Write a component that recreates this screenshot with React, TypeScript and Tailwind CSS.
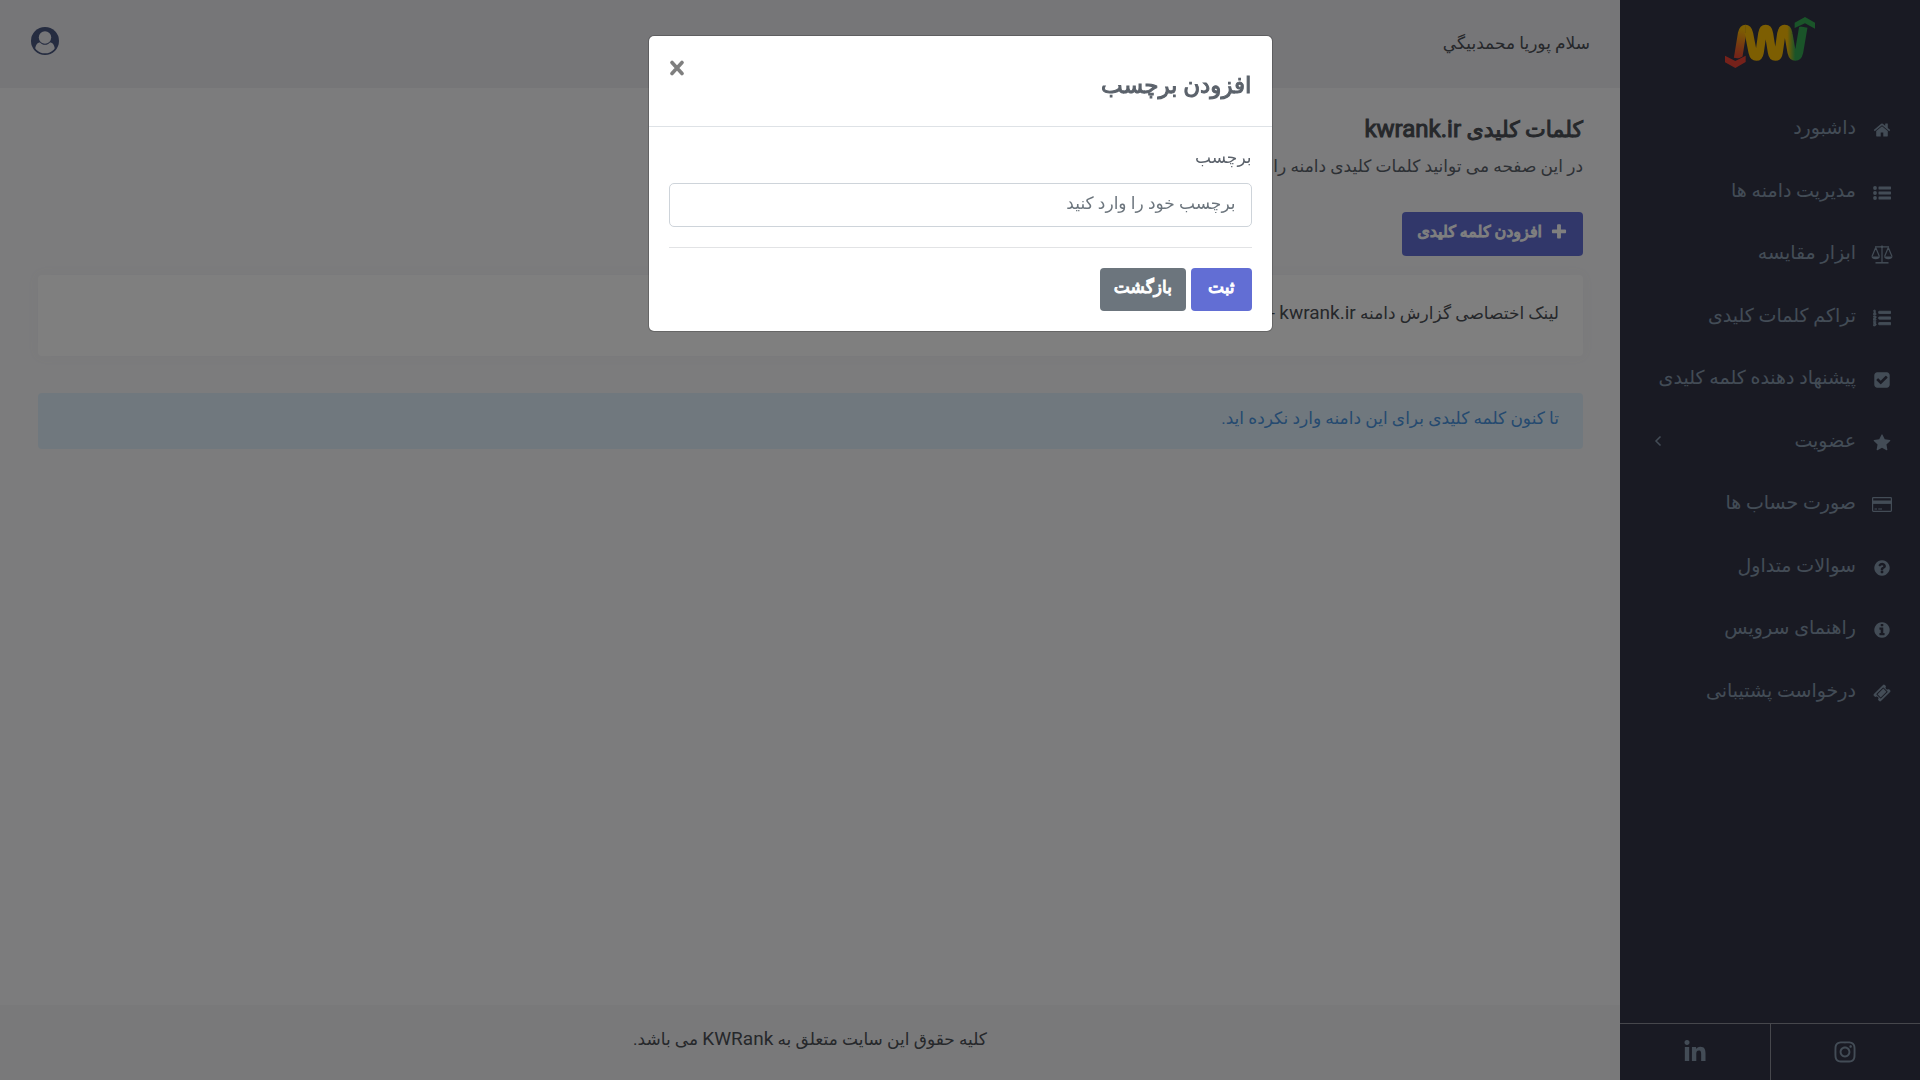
import { FC, ReactNode } from 'react'
import { FaInstagram, FaLinkedinIn, FaListOl } from 'react-icons/fa'

interface GlyphProps {
  d: string
  className?: string
}

const Glyph: FC<GlyphProps> = ({ d, className = 'w-[18px] h-[18px]' }) => (
  <svg viewBox="0 0 1792 1792" className={className} fill="currentColor" aria-hidden="true">
    <path d={d} />
  </svg>
)

const paths = {
  home: 'M1472 992v480q0 26-19 45t-45 19h-384v-384h-256v384h-384q-26 0-45-19t-19-45v-480q0-1 .5-3t.5-3l575-474 575 474q1 2 1 6zm223-69l-62 74q-8 9-21 11h-3q-13 0-21-7l-692-577-692 577q-12 8-24 7-13-2-21-11l-62-74q-8-10-7-23.5t11-21.5l719-599q32-26 76-26t76 26l244 204v-195q0-14 9-23t23-9h192q14 0 23 9t9 23v408l219 182q10 8 11 21.5t-7 23.5z',
  check:
    'M813 1299l614-614q19-19 19-45t-19-45l-102-102q-19-19-45-19t-45 19l-467 467-211-211q-19-19-45-19t-45 19l-102 102q-19 19-19 45t19 45l358 358q19 19 45 19t45-19zm851-883v960q0 119-84.5 203.5t-203.5 84.5h-960q-119 0-203.5-84.5t-84.5-203.5v-960q0-119 84.5-203.5t203.5-84.5h960q119 0 203.5 84.5t84.5 203.5z',
  star: 'M1728 647q0 22-26 48l-363 354 86 500q1 7 1 20 0 21-10.5 35.5t-30.5 14.5q-19 0-40-12l-449-236-449 236q-22 12-40 12-21 0-31.5-14.5t-10.5-35.5q0-6 2-20l86-500-364-354q-25-27-25-48 0-37 56-46l502-73 225-455q19-41 49-41t49 41l225 455 502 73q56 9 56 46z',
  plus: 'M1600 736v192q0 40-28 68t-68 28h-416v416q0 40-28 68t-68 28h-192q-40 0-68-28t-28-68v-416h-416q-40 0-68-28t-28-68v-192q0-40 28-68t68-28h416v-416q0-40 28-68t68-28h192q40 0 68 28t28 68v416h416q40 0 68 28t28 68z',
  info: 'M1152 1376v-160q0-14-9-23t-23-9h-96v-512q0-14-9-23t-23-9h-320q-14 0-23 9t-9 23v160q0 14 9 23t23 9h96v320h-96q-14 0-23 9t-9 23v160q0 14 9 23t23 9h448q14 0 23-9t9-23zm-128-896v-160q0-14-9-23t-23-9h-192q-14 0-23 9t-9 23v160q0 14 9 23t23 9h192q14 0 23-9t9-23zm640 416q0 209-103 385.5t-279.5 279.5-385.5 103-385.5-103-279.5-279.5-103-385.5 103-385.5 279.5-279.5 385.5-103 385.5 103 279.5 279.5 103 385.5z',
  question:
    'M1024 1376v-192q0-14-9-23t-23-9h-192q-14 0-23 9t-9 23v192q0 14 9 23t23 9h192q14 0 23-9t9-23zm256-672q0-88-55.5-163t-138.5-116-170-41q-243 0-371 213-15 24 8 42l132 100q7 6 19 6 16 0 25-12 53-68 86-92 34-24 86-24 48 0 85.5 26t37.5 59q0 38-20 61t-68 45q-63 28-115.5 86.5t-52.5 125.5v36q0 14 9 23t23 9h192q14 0 23-9t9-23q0-19 21.5-49.5t54.5-49.5q32-18 49-28.5t46-35 44.5-48 28-60.5 12.5-81zm384 192q0 209-103 385.5t-279.5 279.5-385.5 103-385.5-103-279.5-279.5-103-385.5 103-385.5 279.5-279.5 385.5-103 385.5 103 279.5 279.5 103 385.5z',
  ticket:
    'M1024 452l316 316-572 572-316-316zm-211 979l618-618q19-19 19-45t-19-45l-362-362q-18-18-45-18t-45 18l-618 618q-19 19-19 45t19 45l362 362q18 18 45 18t45-18zm889-637l-907 908q-37 37-90.5 37t-90.5-37l-126-125q56-56 56-136t-56-136-136-56-136 56l-125-126q-37-37-37-90.5t37-90.5l907-906q37-37 90.5-37t90.5 37l125 125q-56 56-56 136t56 136 136 56 136-56l126 125q37 37 37 90.5t-37 90.5z',
}

const ListIcon = () => (
  <svg viewBox="0 0 18 14" className="w-[18px] h-[14px]" fill="currentColor" aria-hidden="true">
    <circle cx="2" cy="2" r="1.9" />
    <circle cx="2" cy="7" r="1.9" />
    <circle cx="2" cy="12" r="1.9" />
    <rect x="5.5" y="0.5" width="12.5" height="3" rx="0.4" />
    <rect x="5.5" y="5.5" width="12.5" height="3" rx="0.4" />
    <rect x="5.5" y="10.5" width="12.5" height="3" rx="0.4" />
  </svg>
)

const ScaleIcon = () => (
  <svg viewBox="0 0 22 19" className="w-[22px] h-[19px]" fill="none" stroke="currentColor" strokeWidth="1.2" strokeLinejoin="round" aria-hidden="true">
    <path d="M4 1.8H18M11 1V17.5" />
    <circle cx="11" cy="1.8" r="1.2" fill="currentColor" stroke="none" />
    <path d="M4.7 2.5L1 11.5M4.7 2.5L8.4 11.5M17.3 2.5L13.6 11.5M17.3 2.5L21 11.5" />
    <path d="M0.5 11.5H8.9Q8.5 14.3 4.7 14.3T0.5 11.5zM13.1 11.5H21.5Q21.1 14.3 17.3 14.3T13.1 11.5z" fill="currentColor" stroke="none" />
    <path d="M4.5 17.8H17.5" strokeWidth="1.5" />
  </svg>
)

const CardIcon = () => (
  <svg viewBox="0 0 20 15" className="w-5 h-[15px]" fill="none" stroke="currentColor" strokeWidth="1.2" aria-hidden="true">
    <rect x="0.6" y="0.6" width="18.8" height="13.8" rx="0.8" />
    <path d="M0.6 5.2H19.4" strokeWidth="3.4" />
    <path d="M2.5 12H5M6.2 12H10" />
  </svg>
)

const Logo = () => (
  <svg viewBox="0 0 270 153" className="w-[90px] h-[51px]" fill="none" role="img" aria-label="KWRank">
    <defs>
      <linearGradient id="wave" gradientUnits="userSpaceOnUse" x1="34" y1="124" x2="56" y2="28">
        <stop offset="0" stopColor="#ea4335" />
        <stop offset="0.35" stopColor="#ec6a28" />
        <stop offset="0.9" stopColor="#fbbc05" />
      </linearGradient>
      <linearGradient id="rise" gradientUnits="userSpaceOnUse" x1="180" y1="0" x2="214" y2="0">
        <stop offset="0.2" stopColor="#fbbc05" />
        <stop offset="0.9" stopColor="#34a853" />
      </linearGradient>
    </defs>
    <path d="M39 124L51 50Q54 36 62 36" stroke="url(#wave)" strokeWidth="25" />
    <path
      d="M61 36Q69 36 72 50L83 106Q86 119 94 119T104 106L112 50Q114 36 122 36T132 50L141 106Q143 119 151 119T161 106L169 50Q171 36 180 36"
      stroke="#fbbc05"
      strokeWidth="25"
    />
    <path d="M179 36Q188 36 190 50L200 106Q203 119 211 119T222 106L235 30" stroke="url(#rise)" strokeWidth="25" />
    <path d="M207 35V16L240 -3L272 16V38L240 22L209 37z" fill="#333547" />
    <path d="M209 33V17L240 0L270 17V35L240 19z" fill="#34a853" />
    <path d="M-2 113L31 129L64 113V136L31 154L-2 137z" fill="#333547" />
    <path d="M0 116L31 132L62 116V135L31 153L0 136z" fill="#ea4335" />
  </svg>
)

interface MenuEntry {
  label: string
  icon: ReactNode
  expandable?: boolean
}

const menu: MenuEntry[] = [
  { label: 'داشبورد', icon: <Glyph d={paths.home} /> },
  { label: 'مدیریت دامنه ها', icon: <ListIcon /> },
  { label: 'ابزار مقایسه', icon: <ScaleIcon /> },
  { label: 'تراکم کلمات کلیدی', icon: <FaListOl className="w-[18px] h-[18px]" stroke="currentColor" strokeWidth={24} /> },
  { label: 'پیشنهاد دهنده کلمه کلیدی', icon: <Glyph d={paths.check} /> },
  { label: 'عضویت', icon: <Glyph d={paths.star} />, expandable: true },
  { label: 'صورت حساب ها', icon: <CardIcon /> },
  { label: 'سوالات متداول', icon: <Glyph d={paths.question} /> },
  { label: 'راهنمای سرویس', icon: <Glyph d={paths.info} /> },
  { label: 'درخواست پشتیبانی', icon: <Glyph d={paths.ticket} /> },
]

const Sidebar = () => (
  <aside className="w-[300px] shrink-0 flex flex-col bg-[#333547] text-[#8699ad]">
    <a href="#" className="h-[88px] pt-[17px] flex items-start justify-center">
      <Logo />
    </a>
    <nav className="grow pt-[9px]">
      <ul>
        {menu.map((item) => (
          <li key={item.label} className="h-[62px] odd:mb-px">
            <a href="#" className="h-full pr-[27px] pl-[34px] flex items-center">
              <span className="w-[22px] ml-[15px] pt-[3px] flex justify-center">{item.icon}</span>
              <span className="text-[19px] leading-8 whitespace-nowrap">{item.label}</span>
              {item.expandable && (
                <svg viewBox="0 0 8 12" className="w-2 h-3 mr-auto" fill="none" stroke="currentColor" strokeWidth="1.5" aria-hidden="true">
                  <path d="M6.5 1.5L2 6L6.5 10.5" />
                </svg>
              )}
            </a>
          </li>
        ))}
      </ul>
    </nav>
    <div className="h-[57px] flex border-t border-[#8d8e99]">
      <a href="#" aria-label="Instagram" className="flex-1 flex items-center justify-center border-l border-[#8d8e99]">
        <FaInstagram className="w-6 h-6" />
      </a>
      <a href="#" aria-label="LinkedIn" className="flex-1 flex items-center justify-center">
        <FaLinkedinIn className="w-6 h-6" />
      </a>
    </div>
  </aside>
)

const UserIcon = () => (
  <svg viewBox="0 0 28 28" className="w-7 h-7" aria-hidden="true">
    <defs>
      <clipPath id="face">
        <circle cx="14" cy="14" r="12.3" />
      </clipPath>
    </defs>
    <circle cx="14" cy="14" r="14" fill="#4a5880" />
    <g fill="#ececf1" clipPath="url(#face)">
      <path d="M4 24C4 18 6.5 15.5 9 15.5C10.5 17 12 17.8 14 17.8S17.5 17 19 15.5C21.5 15.5 24 18 24 24L14 28z" />
      <circle cx="14" cy="10.5" r="6.2" />
    </g>
  </svg>
)

const Modal = () => (
  <div className="fixed inset-0 z-10 bg-black/50 flex items-start justify-center pt-[35px]">
    <div role="dialog" aria-modal="true" aria-labelledby="modal-title" className="w-full max-w-[625px] bg-white rounded-md border border-black/20 bg-clip-padding text-[#5b626b]">
      <div className="flex justify-between items-start h-[91px] px-5 border-b border-[#dee2e6]">
        <h5 id="modal-title" className="pt-8 text-[23px] leading-9 font-normal [-webkit-text-stroke:1px]">
          افزودن برچسب
        </h5>
        <button type="button" aria-label="Close" className="mt-6 text-[#7f7f7f]">
          <svg viewBox="0 0 16 16" className="w-4 h-4" stroke="currentColor" strokeWidth="3.6" strokeLinecap="round" aria-hidden="true">
            <path d="M3 2.5L13 13.5M13 2.5L3 13.5" />
          </svg>
        </button>
      </div>
      <form className="px-5 pt-[18px] pb-5">
        <label htmlFor="tag" className="block text-[17px] leading-6 mb-[14px]">
          برچسب
        </label>
        <input
          id="tag"
          type="text"
          placeholder="برچسب خود را وارد کنید"
          className="w-full h-11 px-[15px] pb-1 rounded-[5px] border border-[#ced4da] text-[17px] placeholder:text-[#6c757d]"
        />
        <hr className="my-5 border-[#e2e3e5]" />
        <div className="flex gap-[5px] text-white text-[17px] [-webkit-text-stroke:1px]">
          <button type="submit" className="h-[43px] px-[17px] pb-1 rounded-[4px] bg-[#626ed4]">
            ثبت
          </button>
          <button type="button" className="h-[43px] px-[14px] pb-1 rounded-[4px] bg-[#6c757d]">
            بازگشت
          </button>
        </div>
      </form>
    </div>
  </div>
)

const App = () => {
  return (
    <div dir="rtl" className="min-h-screen flex font-[Roboto,'DejaVu_Sans',sans-serif] text-[17px] text-[#5b626b] bg-[#f8f8fa]">
      <Sidebar />
      <div className="grow min-w-0 flex flex-col">
        <header className="h-[88px] pr-[30px] pl-[31px] flex items-center justify-between bg-[#ececf1]">
          <span className="text-[#4c5056]">سلام پوريا محمدبيگي</span>
          <button type="button" aria-label="Account" className="pb-[6px]">
            <UserIcon />
          </button>
        </header>
        <main className="grow pr-[37px] pl-[38px] pt-[25px]">
          <h1 className="text-[22px] leading-8 font-normal text-[#4c5056] [-webkit-text-stroke:1px]">
            کلمات کلیدی <span className="text-[24px]">kwrank.ir</span>
          </h1>
          <p className="leading-8 mt-1 mb-[30px]">در این صفحه می توانید کلمات کلیدی دامنه را</p>
          <button type="button" className="h-11 px-[15px] pb-1 flex items-center gap-2 rounded-[4px] bg-[#626ed4] text-white">
            <Glyph d={paths.plus} className="w-[18px] h-[18px]" />
            <span className="text-[16px] [-webkit-text-stroke:1px]">افزودن کلمه کلیدی</span>
          </button>
          <section className="mt-[19px] h-[81px] px-6 pb-1 flex items-center rounded-[4px] bg-white text-[#4c5056] shadow-[0_0_13px_#f3f3f6]">
            <p>
              لینک اختصاصی گزارش دامنه <span className="text-[19px]">kwrank.ir</span> -
            </p>
          </section>
          <div role="alert" className="mt-[37px] h-14 px-6 pb-1 flex items-center rounded-[4px] bg-[#e1f1fc] text-[#4a94e0]">
            تا کنون کلمه کلیدی برای این دامنه وارد نکرده اید.
          </div>
        </main>
        <footer className="h-[75px] pb-[6px] flex items-center justify-center bg-[#f2f2f5] text-[#4c5056]">
          <p>
            کلیه حقوق این سایت متعلق به <span className="text-[19px]">KWRank</span> می باشد.
          </p>
        </footer>
      </div>
      <Modal />
    </div>
  )
}

export default App
